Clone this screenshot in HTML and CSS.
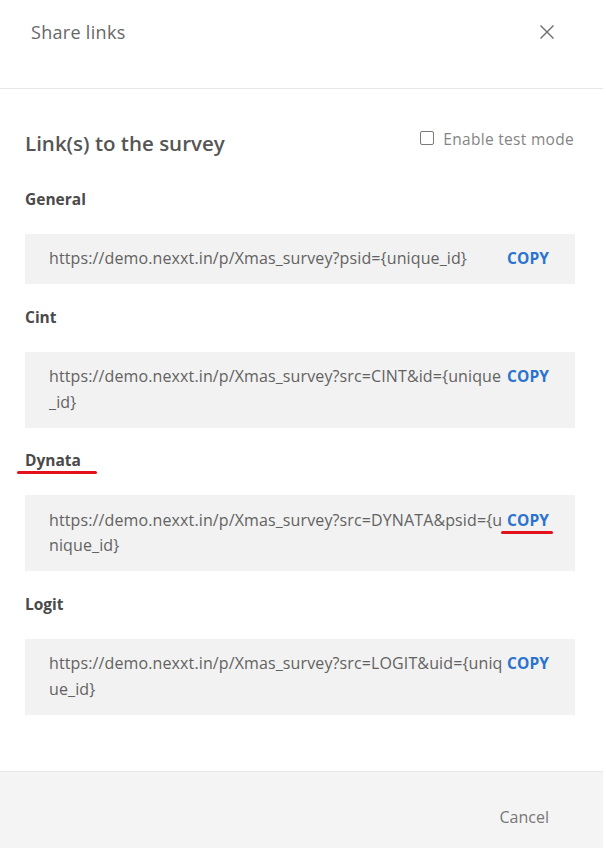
FILE: index.html
```html
<!DOCTYPE html>
<html lang="en">
<head>
<meta charset="utf-8">
<title>Share links</title>
<link rel="stylesheet" href="styles.css">
</head>
<body>
<div class="dialog">
  <header class="dialog-header">
    <h1 class="dialog-title">Share links</h1>
    <button class="close-btn" aria-label="Close">
      <svg width="16" height="16" viewBox="0 0 16 16"><path d="M1.5 1.5 L14.5 14.5 M14.5 1.5 L1.5 14.5" stroke="#6b6b6b" stroke-width="1.4" fill="none"/></svg>
    </button>
  </header>
  <main class="dialog-body">
    <div class="title-row">
      <h2 class="section-title">Link(s) to the survey</h2>
      <label class="test-mode">
        <span class="checkbox"></span>
        <span class="test-label">Enable test mode</span>
      </label>
    </div>

    <section class="link-group">
      <h3 class="link-label">General</h3>
      <div class="link-box">
        <span class="link-url">https://demo.nexxt.in/p/Xmas_survey?psid={unique_id}</span>
        <button class="copy-btn">COPY</button>
      </div>
    </section>

    <section class="link-group">
      <h3 class="link-label">Cint</h3>
      <div class="link-box">
        <span class="link-url">https://demo.nexxt.in/p/Xmas_survey?src=CINT&amp;id={unique_id}</span>
        <button class="copy-btn">COPY</button>
      </div>
    </section>

    <section class="link-group">
      <h3 class="link-label marked">Dynata</h3>
      <div class="link-box">
        <span class="link-url">https://demo.nexxt.in/p/Xmas_survey?src=DYNATA&amp;psid={unique_id}</span>
        <button class="copy-btn marked">COPY</button>
      </div>
    </section>

    <section class="link-group">
      <h3 class="link-label">Logit</h3>
      <div class="link-box">
        <span class="link-url">https://demo.nexxt.in/p/Xmas_survey?src=LOGIT&amp;uid={unique_id}</span>
        <button class="copy-btn">COPY</button>
      </div>
    </section>
  </main>
  <footer class="dialog-footer">
    <button class="cancel-btn">Cancel</button>
  </footer>
</div>
</body>
</html>
```

FILE: styles.css
```css
* { box-sizing: border-box; }

html, body {
  margin: 0;
  padding: 0;
  background: #ffffff;
}

body {
  font-family: "Open Sans", "Noto Sans", "Liberation Sans", sans-serif;
  color: #555;
}

.dialog {
  width: 603px;
  min-height: 100vh;
  background: #fff;
  display: flex;
  flex-direction: column;
}

.dialog-header {
  height: 89px;
  flex: none;
  padding: 20px 48px 0 31px;
  border-bottom: 1px solid #e6e8eb;
  display: flex;
  justify-content: space-between;
  align-items: flex-start;
}

.dialog-title {
  margin: 0;
  font-size: 18px;
  line-height: 24px;
  font-weight: 400;
  letter-spacing: 0.3px;
  color: #676767;
}

.close-btn {
  border: 0;
  background: none;
  padding: 0;
  margin-top: 4px;
  width: 16px;
  height: 16px;
  cursor: pointer;
}

.close-btn svg { display: block; }

.dialog-body {
  flex: 1;
  padding: 40px 28px 40px 25px;
  display: flex;
  flex-direction: column;
  gap: 22.5px;
}

.title-row {
  display: flex;
  justify-content: space-between;
  align-items: flex-start;
  margin-bottom: 9px;
}

.section-title {
  margin: 0;
  font-size: 20.5px;
  line-height: 28px;
  font-weight: 600;
  color: #555;
}

.test-mode {
  display: flex;
  align-items: flex-start;
  gap: 9px;
  margin-top: 2px;
  margin-right: 1px;
}

.checkbox {
  width: 14px;
  height: 14px;
  flex: none;
  border: 1.5px solid #7a7a7a;
  border-radius: 2px;
  background: #fff;
}

.test-label {
  font-size: 15.5px;
  line-height: 18px;
  letter-spacing: 0.3px;
  margin-top: -1px;
  color: #858585;
}

.link-group {
  display: flex;
  flex-direction: column;
  gap: 25px;
}

.link-label {
  margin: 0;
  font-size: 15.5px;
  line-height: 20px;
  font-weight: 700;
  color: #4a4a4a;
  align-self: flex-start;
  position: relative;
}

.link-box {
  background: #f2f2f2;
  padding: 12.5px 26px 12.5px 24px;
  display: flex;
  align-items: flex-start;
}

.link-url {
  flex: none;
  width: 457px;
  font-size: 16px;
  line-height: 25.5px;
  letter-spacing: 0.12px;
  color: #626262;
  word-break: break-all;
}

.copy-btn {
  margin-left: auto;
  border: 0;
  background: none;
  padding: 0;
  font-family: inherit;
  font-size: 15.5px;
  line-height: 25px;
  font-weight: 700;
  letter-spacing: 0.1px;
  color: #2b72d0;
  position: relative;
  cursor: pointer;
}

.marked::after {
  content: "";
  position: absolute;
  height: 3px;
  border-radius: 2px;
  background: #e3111b;
}

.link-label.marked::after {
  left: -8px;
  width: 80px;
  top: 21px;
}

.copy-btn.marked::after {
  left: -6px;
  width: 52px;
  top: 23px;
}

.dialog-footer {
  height: 77px;
  flex: none;
  background: #f4f4f4;
  border-top: 1px solid #e8e8e8;
  display: flex;
  justify-content: flex-end;
  align-items: flex-start;
  padding: 33px 54px 0 0;
}

.cancel-btn {
  border: 0;
  background: none;
  padding: 0;
  font-family: inherit;
  font-size: 16px;
  line-height: 24px;
  color: #777;
  cursor: pointer;
}
```
